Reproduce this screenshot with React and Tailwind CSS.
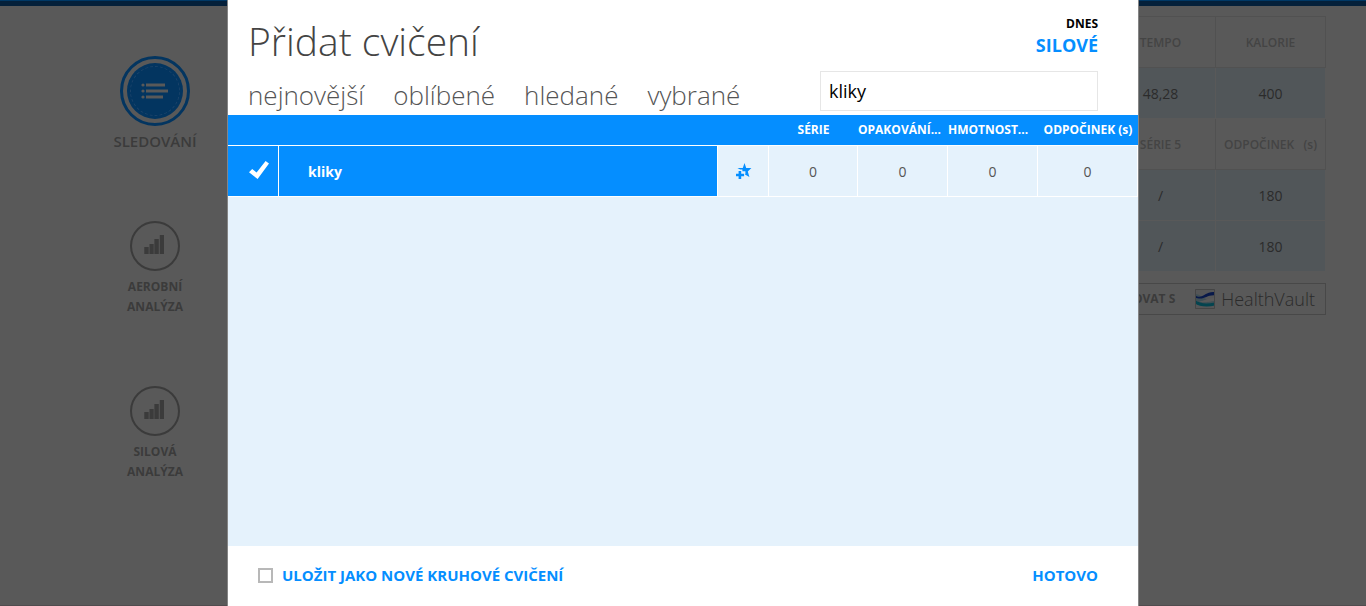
import { useState } from "react";

const TABS = ["nejnovější", "oblíbené", "hledané", "vybrané"];

const ListIcon = () => (
  <svg viewBox="0 0 27 16" className="w-[27px] h-4" fill="#595959">
    <circle cx="2" cy="2" r="1.6" />
    <circle cx="2" cy="8" r="1.6" />
    <circle cx="2" cy="14" r="1.6" />
    <path d="M5 0.5h19v3H5zM5 6.5h22v3H5zM5 12.5h17v3H5z" />
  </svg>
);

const BarsIcon = () => (
  <svg viewBox="0 0 22 24" className="w-[22px] h-6" fill="#3b3b3b">
    <path d="M0.3 13h4.4v7H0.3zM5.5 10h4.2v10H5.5zM10.4 5h4.4v15h-4.4zM15.8 1h4.2v19h-4.2z" />
  </svg>
);

const CheckIcon = () => (
  <svg viewBox="0 0 20 20" className="w-5 h-5" fill="#ffffff">
    <path d="M0 11.2 3.2 8 7.6 11.4 16.6 0 20 2.6 8.6 18z" />
  </svg>
);

const StarPlusIcon = () => (
  <svg viewBox="0 0 16 17" className="w-4 h-[17px]">
    <path
      fill="#058eff"
      d="M8.5 0 10.2 5H15.4L11.8 8.4 13.4 14 9 11.4 9.4 10.6V8.2H6.4V6.6H4.2L1.4 5H6.8z"
    />
    <path fill="#058eff" d="M2.6 8h2.6v2.8h2.9v2.4H5.2V16H2.6v-2.8H0v-2.4h2.6z" />
  </svg>
);

const VaultLogo = () => (
  <svg viewBox="0 0 20 20" className="w-5 h-5">
    <path fill="#555657" d="M0 0h20v20H0z" />
    <path fill="#3f4f55" d="M0 5c5 0 9 5 14 6l6-1v5H9C4 14 2 12 0 11z" />
    <path fill="#08194a" d="M0 6.5C8 11 10 2 20 3.2v3C11 5.5 9 12 0 8.5z" />
    <path fill="#595959" d="M4 12.4c5-0.4 9-3.4 16-3.6v3c-6 1.6-11 2-16 0.6z" />
    <path fill="#04444f" d="M0 11c5 4 12 4 20 2.4v3c-8 2-16 1-20-2z" />
    <path fill="none" stroke="#454545" d="M0.5 0.5h19v19h-19z" />
  </svg>
);

function SideItem({ label }) {
  return (
    <a href="#" className="flex flex-col items-center">
      <span className="w-[50px] h-[50px] rounded-full border-2 border-[#3b3b3b] flex items-center justify-center">
        <BarsIcon />
      </span>
      <span className="mt-1.5 w-20 text-center text-xs leading-5 font-bold text-[#3b3b3b]">{label}</span>
    </a>
  );
}

function Sidebar() {
  return (
    <nav className="ml-[100px] w-[110px] pt-[50px] flex flex-col items-center">
      <a href="#" className="flex flex-col items-center">
        <span className="w-[70px] h-[70px] rounded-full border-[3px] border-[#033560] p-1 flex">
          <span className="flex-1 rounded-full bg-[#033560] p-[3px] flex">
            <span className="flex-1 rounded-full border border-dashed border-[#1c446a] flex items-center justify-center">
              <ListIcon />
            </span>
          </span>
        </span>
        <span className="mt-[5px] text-[15px] leading-5 font-semibold text-[#3b3b3b]">SLEDOVÁNÍ</span>
      </a>
      <div className="mt-[70px] flex flex-col gap-[69px]">
        <SideItem label="AEROBNÍ ANALÝZA" />
        <SideItem label="SILOVÁ ANALÝZA" />
      </div>
    </nav>
  );
}

const headCell = "h-[51px] pt-0.5 border border-[#515151] text-xs font-semibold text-[#444444] whitespace-pre";
const bodyCell = "h-[51px] pt-0.5 border border-[#595959] bg-[#515659] text-sm text-[#2b2b2b]";

function Summary() {
  return (
    <div className="mr-10 pt-2.5 flex flex-col items-end">
      <table className="border-collapse table-fixed w-[221px] text-center">
        <tbody>
          <tr>
            <th className={headCell}>TEMPO</th>
            <th className={headCell}>KALORIE</th>
          </tr>
          <tr>
            <td className={bodyCell}>48,28</td>
            <td className={bodyCell}>400</td>
          </tr>
          <tr>
            <th className={headCell}>SÉRIE 5</th>
            <th className={headCell}>{"ODPOČINEK   (s)"}</th>
          </tr>
          <tr>
            <td className={bodyCell}>/</td>
            <td className={bodyCell}>180</td>
          </tr>
          <tr>
            <td className={bodyCell}>/</td>
            <td className={bodyCell}>180</td>
          </tr>
        </tbody>
      </table>
      <button className="mt-[11px] h-8 px-2.5 border border-[#484848] flex items-center text-[#2b2b2b]">
        <span className="mr-5 text-xs font-bold text-[#3b3b3b]">OVAT S</span>
        <VaultLogo />
        <span className="ml-1.5 text-lg font-light">HealthVault</span>
      </button>
    </div>
  );
}

const valueCell = "pt-0.5 border-r border-b border-white";

function AddExercise() {
  const [query, setQuery] = useState("kliky");
  const [saveAsCircuit, setSaveAsCircuit] = useState(false);

  return (
    <div
      role="dialog"
      aria-labelledby="dialog-title"
      className="absolute inset-y-0 left-1/2 -translate-x-1/2 w-[912px] max-w-full bg-white border-x border-[#858585] flex flex-col"
    >
      <header className="h-[115px] pl-5 pr-10 flex justify-between">
        <div>
          <h1 id="dialog-title" className="mt-[11px] text-[39px] leading-[60px] font-light text-[#444444]">
            Přidat cvičení
          </h1>
          <div className="mt-1 flex gap-[29px]">
            {TABS.map((tab) => (
              <button key={tab} className="text-[26px] leading-10 font-light text-[#555555]">
                {tab}
              </button>
            ))}
          </div>
        </div>
        <div className="pt-3.5 flex flex-col items-end">
          <span className="text-xs leading-5 font-bold text-black">DNES</span>
          <a href="#" className="text-lg leading-[22px] font-bold text-[#058eff]">
            SILOVÉ
          </a>
          <input
            type="text"
            aria-label="Hledat cvičení"
            value={query}
            onChange={(e) => setQuery(e.target.value)}
            className="mt-[15px] w-[278px] h-10 px-2 border border-[#e6e6e6] text-lg text-black outline-none"
          />
        </div>
      </header>

      <div className="flex-1 bg-[#e5f2fc]">
        <table className="w-full table-fixed border-separate border-spacing-0 text-center">
          <colgroup>
            <col className="w-[51px]" />
            <col />
            <col className="w-[51px]" />
            <col className="w-[89px]" />
            <col className="w-[90px]" />
            <col className="w-[90px]" />
            <col className="w-[100px]" />
          </colgroup>
          <thead>
            <tr className="bg-[#058eff] text-xs font-bold text-white whitespace-nowrap">
              <th colSpan={3} className="h-[31px] border-b border-white"></th>
              <th className="border-b border-white">SÉRIE</th>
              <th className="border-b border-white text-left">OPAKOVÁNÍ...</th>
              <th className="border-b border-white text-left">HMOTNOST...</th>
              <th className="border-b border-white">ODPOČINEK (s)</th>
            </tr>
          </thead>
          <tbody>
            <tr className="text-sm text-[#555555]">
              <td className="h-[51px] bg-[#058eff] border-r border-b border-white">
                <div className="pl-3 flex justify-center">
                  <CheckIcon />
                </div>
              </td>
              <td className="pt-0.5 pl-[29px] bg-[#058eff] border-r border-b border-white text-left font-bold text-white">
                kliky
              </td>
              <td className="border-r border-b border-white">
                <button aria-label="Přidat k oblíbeným" className="block ml-[18px]">
                  <StarPlusIcon />
                </button>
              </td>
              <td className={valueCell}>0</td>
              <td className={valueCell}>0</td>
              <td className={valueCell}>0</td>
              <td className={valueCell}>0</td>
            </tr>
          </tbody>
        </table>
      </div>

      <footer className="h-[60px] pb-0.5 pl-[30px] pr-10 flex items-center justify-between text-[15px] font-bold text-[#058eff]">
        <label className="flex items-center gap-[9px]">
          <input
            type="checkbox"
            checked={saveAsCircuit}
            onChange={(e) => setSaveAsCircuit(e.target.checked)}
            className="appearance-none w-[15px] h-[15px] border-2 border-[#b8b8b8] bg-white checked:bg-[#058eff]"
          />
          ULOŽIT JAKO NOVÉ KRUHOVÉ CVIČENÍ
        </label>
        <button>HOTOVO</button>
      </footer>
    </div>
  );
}

export default function App() {
  return (
    <div className="relative min-h-screen overflow-hidden bg-[#595959] font-['Open_Sans',sans-serif] flex flex-col">
      <div className="h-1.5 bg-[#04203a] border-t border-[#003865]"></div>
      <div className="flex-1 flex justify-between items-start border-b border-[#504c4e]">
        <Sidebar />
        <Summary />
      </div>
      <AddExercise />
    </div>
  );
}
